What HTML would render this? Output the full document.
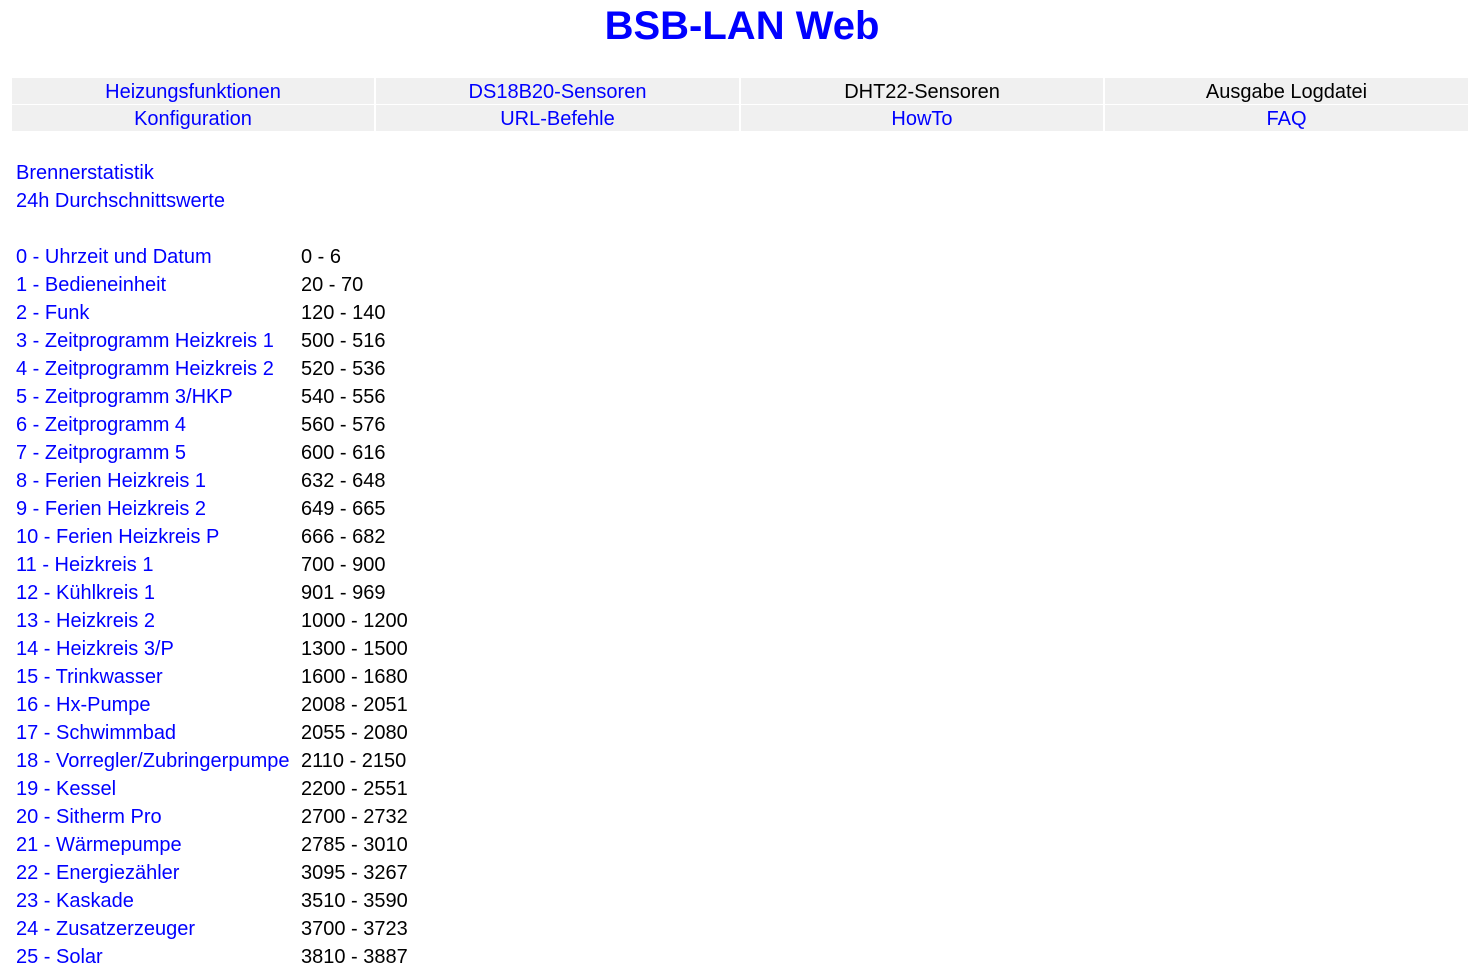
<!DOCTYPE html>
<html><head><meta charset="utf-8"><style>
body{margin:0;font-family:"Liberation Sans",sans-serif;font-size:20px;background:#fff;color:#000;overflow:hidden;width:1484px;height:957px}
h1{position:absolute;left:0;width:1484px;top:3px;margin:0;text-align:center;font-size:40px;line-height:46px;color:#0000ff;font-weight:bold}
.c{position:absolute;height:26px;line-height:28px;background:#f0f0f0;text-align:center;color:#0000ff}
.k{color:#000}
.l{position:absolute;line-height:28px;white-space:nowrap}
.b{color:#0000ff}
</style></head><body>
<h1>BSB-LAN Web</h1>
<div class="c" style="left:12px;top:78px;width:362px">Heizungsfunktionen</div>
<div class="c" style="left:376px;top:78px;width:363px">DS18B20-Sensoren</div>
<div class="c k" style="left:741px;top:78px;width:362px">DHT22-Sensoren</div>
<div class="c k" style="left:1105px;top:78px;width:363px">Ausgabe Logdatei</div>
<div class="c" style="left:12px;top:105px;width:362px">Konfiguration</div>
<div class="c" style="left:376px;top:105px;width:363px">URL-Befehle</div>
<div class="c" style="left:741px;top:105px;width:362px">HowTo</div>
<div class="c" style="left:1105px;top:105px;width:363px">FAQ</div>
<div class="l b" style="left:16px;top:159px">Brennerstatistik<br>24h Durchschnittswerte</div>
<div class="l b" style="left:16px;top:243px">0 - Uhrzeit und Datum<br>1 - Bedieneinheit<br>2 - Funk<br>3 - Zeitprogramm Heizkreis 1<br>4 - Zeitprogramm Heizkreis 2<br>5 - Zeitprogramm 3/HKP<br>6 - Zeitprogramm 4<br>7 - Zeitprogramm 5<br>8 - Ferien Heizkreis 1<br>9 - Ferien Heizkreis 2<br>10 - Ferien Heizkreis P<br>11 - Heizkreis 1<br>12 - Kühlkreis 1<br>13 - Heizkreis 2<br>14 - Heizkreis 3/P<br>15 - Trinkwasser<br>16 - Hx-Pumpe<br>17 - Schwimmbad<br>18 - Vorregler/Zubringerpumpe<br>19 - Kessel<br>20 - Sitherm Pro<br>21 - Wärmepumpe<br>22 - Energiezähler<br>23 - Kaskade<br>24 - Zusatzerzeuger<br>25 - Solar</div>
<div class="l" style="left:301px;top:243px">0 - 6<br>20 - 70<br>120 - 140<br>500 - 516<br>520 - 536<br>540 - 556<br>560 - 576<br>600 - 616<br>632 - 648<br>649 - 665<br>666 - 682<br>700 - 900<br>901 - 969<br>1000 - 1200<br>1300 - 1500<br>1600 - 1680<br>2008 - 2051<br>2055 - 2080<br>2110 - 2150<br>2200 - 2551<br>2700 - 2732<br>2785 - 3010<br>3095 - 3267<br>3510 - 3590<br>3700 - 3723<br>3810 - 3887</div>
</body></html>
